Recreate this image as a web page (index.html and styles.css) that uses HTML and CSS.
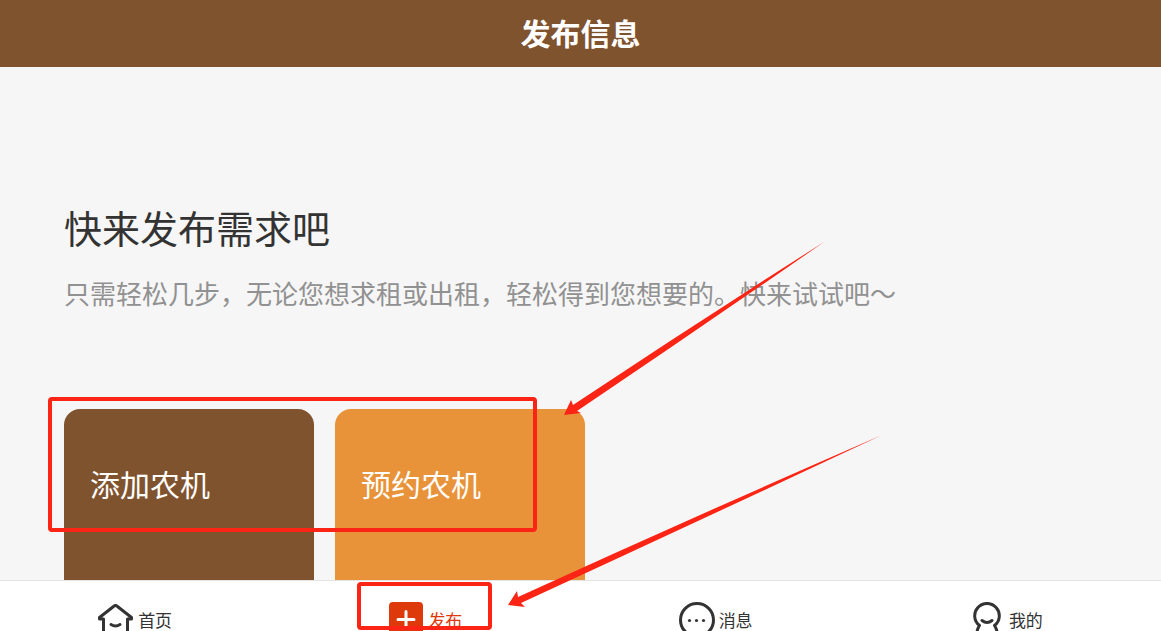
FILE: index.html
```html
<!DOCTYPE html>
<html lang="zh-CN">
<head>
<meta charset="utf-8">
<meta name="viewport" content="width=device-width, initial-scale=1">
<title>发布信息</title>
<link rel="stylesheet" href="styles.css">
</head>
<body>
<header class="topbar"><h1 class="topbar-title">发布信息</h1></header>
<main class="content">
  <h2 class="headline">快来发布需求吧</h2>
  <p class="intro">只需轻松几步，无论您想求租或出租，轻松得到您想要的。快来试试吧～</p>
  <div class="cards">
    <button class="card card-add" type="button">添加农机</button>
    <button class="card card-book" type="button">预约农机</button>
  </div>
</main>
<nav class="tabbar">
  <a class="tab" href="#home">
    <svg class="tab-icon" viewBox="0 0 36 36" fill="none" stroke="#333" stroke-width="3" stroke-linecap="round" stroke-linejoin="round"><path d="M5.500 34V17H1.500V15.500L15.500 4.500Q17.500 2.500 19.500 4.500L33.500 15.500V17H29.500V34M13 22.500Q17.500 25.500 22 22.500"/></svg>
    <span class="tab-label">首页</span>
  </a>
  <a class="tab tab-active" href="#publish">
    <svg class="tab-icon" viewBox="0 0 36 36"><rect x="1" y="0" width="34" height="34" rx="4" fill="#de390b"/><path d="M18 9.500V25.500M10 17.500H26" stroke="#fff" stroke-width="3" stroke-linecap="round"/></svg>
    <span class="tab-label">发布</span>
  </a>
  <a class="tab" href="#messages">
    <svg class="tab-icon" viewBox="0 0 36 36"><circle cx="18" cy="18" r="16.500" fill="none" stroke="#333" stroke-width="3"/><g fill="#333"><circle cx="10.500" cy="18.500" r="1.600"/><circle cx="17.500" cy="18.500" r="1.600"/><circle cx="24.500" cy="18.500" r="1.600"/></g></svg>
    <span class="tab-label">消息</span>
  </a>
  <a class="tab" href="#mine">
    <svg class="tab-icon" viewBox="0 0 36 36" fill="none" stroke="#333" stroke-width="3" stroke-linecap="round" stroke-linejoin="round"><path d="M7.500 33Q8 27 10.500 23.500A12.300 12.300 0 1 1 25.500 23.500Q28 27 28.500 33M13 18.500Q18 22.500 23 18.500"/></svg>
    <span class="tab-label">我的</span>
  </a>
</nav>
<svg class="marks" width="1161" height="631" viewBox="0 0 1161 631" aria-hidden="true">
  <g fill="none" stroke="#fc2414" stroke-width="4">
    <rect x="50" y="399" width="485" height="131" rx="2"/>
    <rect x="359" y="584" width="131" height="44" rx="2"/>
  </g>
  <g fill="#fc2414">
    <path d="M824 242Q698 322 573 405L571 400L564 415L581 413L577 411Q702 327 824 242Z"/>
    <path d="M882 435Q700 514 518 597L517 591L508 605L525 607L521 603Q703 519 882 435Z"/>
  </g>
</svg>
</body>
</html>
```
FILE: styles.css
```css
* { box-sizing: border-box; }

body {
  position: relative;
  display: flex;
  flex-direction: column;
  height: 100vh;
  margin: 0;
  overflow: hidden;
  background: #f6f6f6;
  color: #333;
  font-family: "Noto Sans CJK SC", sans-serif;
}

.topbar {
  flex: none;
  padding: 12px 16px 15px;
  background: #80532f;
  color: #fff;
  text-align: center;
}

.topbar-title {
  margin: 0;
  font-size: 30px;
  line-height: 40px;
  font-weight: 700;
}

.content {
  flex: 1;
  min-height: 0;
  padding: 130px 64px 0;
  overflow: hidden;
}

.headline {
  margin: 0;
  font-size: 38px;
  line-height: 60px;
  font-weight: 400;
}

.intro {
  margin: 16px 0 96px;
  color: #919191;
  font-size: 26px;
  line-height: 40px;
}

.cards {
  display: flex;
  gap: 21px;
}

.card {
  width: 250px;
  height: 250px;
  padding: 0 26px 102px;
  border: 0;
  border-radius: 16px;
  color: #fff;
  font: inherit;
  font-size: 30px;
  line-height: 40px;
  text-align: left;
}

.card-add { background: #80532f; }
.card-book { background: #e8933a; }

.tabbar {
  display: flex;
  flex: none;
  height: 51px;
  border-top: 1px solid #e4e4e4;
  background: #fff;
  overflow: hidden;
}

.tab {
  display: flex;
  flex: 1;
  align-items: flex-start;
  justify-content: center;
  gap: 4px;
  padding: 21px 20px 0 0;
  color: #333;
  text-decoration: none;
}

.tab-icon {
  flex: none;
  width: 36px;
  height: 36px;
}

.tab-label {
  margin-top: 8px;
  font-size: 17px;
  line-height: 20px;
}

.tab-active { color: #de390b; }

.marks {
  position: absolute;
  top: 0;
  left: 0;
  pointer-events: none;
}
```
